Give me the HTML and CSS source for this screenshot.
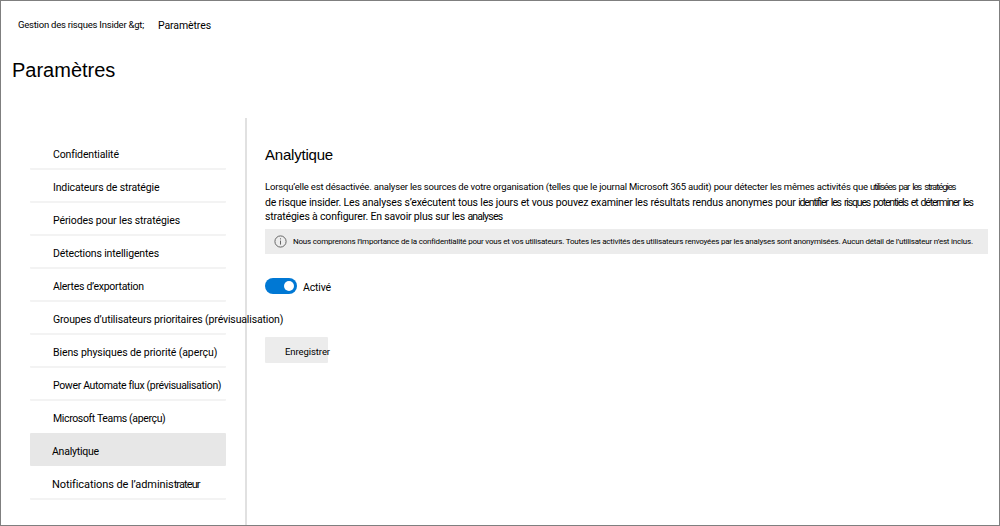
FILE: index.html
```html
<!DOCTYPE html>
<html lang="fr">
<head>
<meta charset="utf-8">
<title>Paramètres</title>
<link rel="stylesheet" href="styles.css">
</head>
<body>
<div class="page">
  <nav class="crumbs"><span class="crumb-parent">Gestion des risques Insider &amp;gt;</span><span class="crumb-current">Paramètres</span></nav>
  <h1 class="title">Paramètres</h1>
  <div class="layout">
    <ul class="menu">
      <li class="item s1">Confidentialité</li>
      <li class="item s2">Indicateurs de stratégie</li>
      <li class="item s3">Périodes pour les stratégies</li>
      <li class="item s4">Détections intelligentes</li>
      <li class="item s5">Alertes d’exportation</li>
      <li class="item s6">Groupes d’utilisateurs prioritaires (prévisualisation)</li>
      <li class="item s7">Biens physiques de priorité (aperçu)</li>
      <li class="item s8">Power Automate flux (prévisualisation)</li>
      <li class="item s9">Microsoft Teams (aperçu)</li>
      <li class="item selected">Analytique</li>
      <li class="item last">Notifications de l’adminis<span class="tight">trateur</span></li>
    </ul>
    <main class="content">
      <h2 class="heading">Analytique</h2>
      <div class="description">
        <div class="line l1">Lorsqu’elle est désactivée. analyser les sources de votre organisation (telles que le journal Microsoft 365 audit) pour détecter les mêmes activités que <span class="tight">utilisées par les stratégies</span></div>
        <div class="line l2">de risque insider. Les analyses s’exécutent tous les jours et vous pouvez examiner les résultats rendus anonymes pour <span class="tight">identifier les risques potentiels et déterminer les</span></div>
        <div class="line l3">stratégies à configurer. En savoir plus sur les <span class="tight">analyses</span></div>
      </div>
      <div class="notice">
        <svg class="info" viewBox="0 0 13 13"><circle cx="6.5" cy="6.5" r="5.6"/><path d="M6.5 5.6v4M6.5 3.3v1.1"/></svg>
        <span class="notice-text">Nous comprenons l’importance de la confidentialité pour vous et vos utilisateurs. Toutes les activités des utilisateurs renvoyées par les analyses sont anonymisées. Aucun détail de l’utilisateur n’est inclus.</span>
      </div>
      <div class="toggle-row"><span class="toggle"><span class="knob"></span></span><span class="toggle-label">Activé</span></div>
      <div class="save">Enregistrer</div>
    </main>
  </div>
</div>
</body>
</html>
```
FILE: styles.css
```css
* { box-sizing: border-box; }
body { margin: 0; background: #fff; color: #000; font: 10.5px/14px Roboto, sans-serif; white-space: nowrap; }
.page { height: 526px; border: 1px solid #7f7f7f; overflow: hidden; }

.crumbs { display: flex; height: 34px; padding: 17px 0 0 17px; }
.crumb-parent { width: 140px; font-size: 9.5px; letter-spacing: -.227px; }
.crumb-current { padding-top: 1px; letter-spacing: -.1px; }
.title { margin: 21px 0 0 11px; font: 20px/28px "Liberation Sans", sans-serif; }

.layout { display: flex; height: 408px; margin-top: 34px; }
.menu { width: 246px; margin: 0; padding: 19px 19px 0 29px; list-style: none; border-right: 2px solid #e1e1e1; }
.item { height: 33px; padding: 11px 0 0 23px; border-bottom: 2px solid #f3f3f3; border-radius: 1px; }
.s1 { letter-spacing: -.14px; }
.s2 { letter-spacing: -.14px; }
.s3 { letter-spacing: -.11px; }
.s4 { letter-spacing: -.145px; }
.s5 { letter-spacing: -.3px; }
.s6 { position: relative; letter-spacing: -.14px; }
.s7 { letter-spacing: -.09px; }
.s8 { letter-spacing: -.34px; }
.s9 { height: 32px; border-bottom: 0; letter-spacing: -.36px; }
.selected { padding: 12px 0 0 22px; background: #e7e7e7; border-bottom-color: #e7e7e7; letter-spacing: -.23px; }
.last { height: 34px; padding: 12px 0 0 22px; font-size: 11px; letter-spacing: -.09px; }
.last .tight { letter-spacing: -.904px; }

.content { width: 742px; padding: 28px 0 0 18px; }
.heading { margin: 0; font: 15px/18px "Liberation Sans", sans-serif; letter-spacing: -.206px; }
.description { height: 65px; padding-top: 16px; }
.line { height: 15px; }
.l1 { height: 16px; font-size: 9.5px; letter-spacing: -.18px; }
.l2 { height: 14px; letter-spacing: -.165px; }
.l3 { letter-spacing: -.173px; }
.l1 .tight { letter-spacing: -1.08px; word-spacing: 1.8px; }
.l2 .tight { letter-spacing: -1.16px; word-spacing: 1.6px; }
.l3 .tight { letter-spacing: -.77px; }

.notice { display: flex; align-items: center; width: 723px; height: 25px; padding-left: 9px; background: #ececec; }
.info { width: 13px; height: 13px; margin-right: 6px; fill: none; stroke: #666; stroke-width: 1; }
.notice-text { font-size: 8px; letter-spacing: -.201px; }

.toggle-row { display: flex; height: 16px; margin-top: 24px; }
.toggle { display: flex; justify-content: flex-end; width: 32px; height: 16px; padding: 3px; border-radius: 8px; background: #0078d4; }
.knob { width: 10px; height: 10px; border-radius: 50%; background: #fff; }
.toggle-label { padding: 3px 0 0 6px; letter-spacing: -.17px; }
.save { width: 63px; height: 26px; margin-top: 43px; padding: 8px 0 0 20px; background: #ececec; border-radius: 1px; font-size: 9.5px; letter-spacing: -.078px; }
```
